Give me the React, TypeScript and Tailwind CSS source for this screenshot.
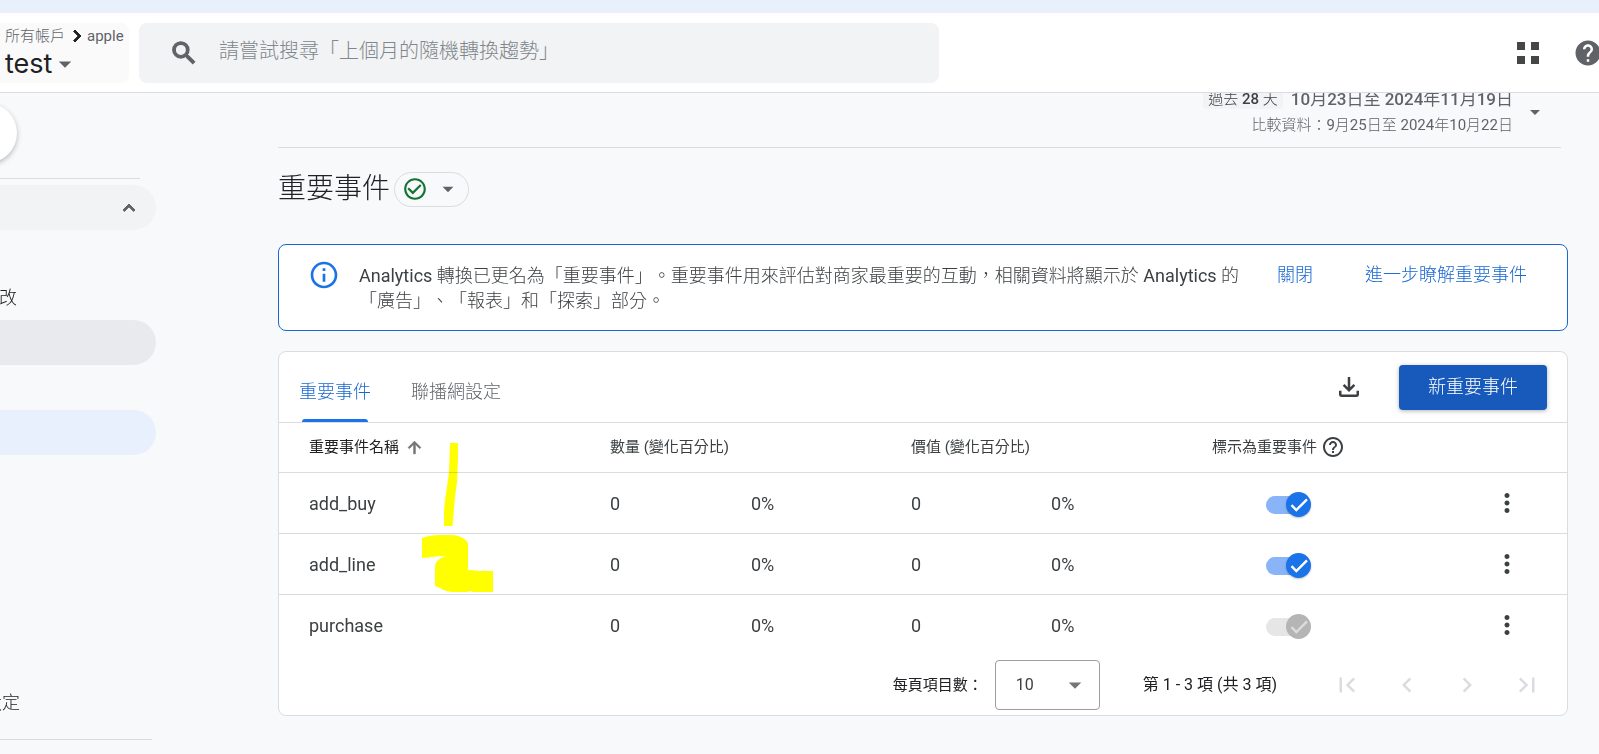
import React from "react";

type EventRow = { name: string; count: string; countChange: string; value: string; valueChange: string; locked?: boolean };

const rows: EventRow[] = [
  { name: "add_buy", count: "0", countChange: "0%", value: "0", valueChange: "0%" },
  { name: "add_line", count: "0", countChange: "0%", value: "0", valueChange: "0%" },
  { name: "purchase", count: "0", countChange: "0%", value: "0", valueChange: "0%", locked: true },
];

function Icon({ d, className }: { d: string; className: string }) {
  return (
    <svg viewBox="0 0 24 24" fill="currentColor" aria-hidden="true" className={className}>
      <path d={d} />
    </svg>
  );
}

const paths = {
  search:
    "M15.5 14h-.79l-.28-.27A6.471 6.471 0 0 0 16 9.5 6.5 6.5 0 1 0 9.5 16c1.61 0 3.09-.59 4.23-1.57l.27.28v.79l5 4.99L20.49 19l-4.99-5zm-6 0C7.01 14 5 11.99 5 9.5S7.01 5 9.5 5 14 7.01 14 9.5 11.99 14 9.5 14z",
  help: "M12 2C6.48 2 2 6.48 2 12s4.48 10 10 10 10-4.48 10-10S17.52 2 12 2zm1 17h-2v-2h2v2zm2.07-7.75-.9.92C13.45 12.9 13 13.5 13 15h-2v-.5c0-1.1.45-2.1 1.17-2.83l1.24-1.26c.37-.36.59-.86.59-1.41 0-1.1-.9-2-2-2s-2 .9-2 2H8c0-2.21 1.79-4 4-4s4 1.79 4 4c0 .88-.36 1.68-.93 2.25z",
  helpOutline:
    "M11 18h2v-2h-2v2zm1-16C6.48 2 2 6.48 2 12s4.48 10 10 10 10-4.48 10-10S17.52 2 12 2zm0 18c-4.41 0-8-3.59-8-8s3.59-8 8-8 8 3.59 8 8-3.59 8-8 8zm0-14c-2.21 0-4 1.79-4 4h2c0-1.1.9-2 2-2s2 .9 2 2c0 2-3 1.75-3 5h2c0-2.25 3-2.5 3-5 0-2.21-1.79-4-4-4z",
  info: "M11 7h2v2h-2zm0 4h2v6h-2zm1-9C6.48 2 2 6.48 2 12s4.48 10 10 10 10-4.48 10-10S17.52 2 12 2zm0 18c-4.41 0-8-3.59-8-8s3.59-8 8-8 8 3.59 8 8-3.59 8-8 8z",
  check:
    "M16.59 7.58 10 14.17l-3.59-3.58L5 12l5 5 8-8zM12 2C6.48 2 2 6.48 2 12s4.48 10 10 10 10-4.48 10-10S17.52 2 12 2zm0 18c-4.42 0-8-3.58-8-8s3.58-8 8-8 8 3.58 8 8-3.58 8-8 8z",
  drop: "M7 10l5 5 5-5z",
  expandLess: "M12 8l-6 6 1.41 1.41L12 10.83l4.59 4.58L18 14z",
  chevronRight: "M10 6 8.59 7.41 13.17 12l-4.58 4.59L10 18l6-6z",
  chevronLeft: "M15.41 7.41 14 6l-6 6 6 6 1.41-1.41L10.83 12z",
  first: "M18.41 16.59 13.82 12l4.59-4.59L17 6l-6 6 6 6zM6 6h2v12H6z",
  last: "M5.59 7.41 10.18 12l-4.59 4.59L7 18l6-6-6-6zM16 6h2v12h-2z",
  arrowUp: "M4 12l1.41 1.41L11 7.83V20h2V7.83l5.58 5.59L20 12l-8-8-8 8z",
  more: "M12 8c1.1 0 2-.9 2-2s-.9-2-2-2-2 .9-2 2 .9 2 2 2zm0 2c-1.1 0-2 .9-2 2s.9 2 2 2 2-.9 2-2-.9-2-2-2zm0 6c-1.1 0-2 .9-2 2s.9 2 2 2 2-.9 2-2-.9-2-2-2z",
  download: "M11 4h2v8.2l2.6-2.6L17 11l-5 5-5-5 1.4-1.4 2.6 2.6zM4 15h2v3h12v-3h2v3c0 1.1-.9 2-2 2H6c-1.1 0-2-.9-2-2z",
  apps: "M1 1h8v8H1zM15 1h8v8h-8zM1 15h8v8H1zM15 15h8v8h-8z",
};

function Header() {
  return (
    <header className="relative z-10 flex h-20 shrink-0 items-center border-b border-[#dadce0] bg-white">
      <button className="flex h-15 w-[129px] shrink-0 flex-col justify-center rounded-r-lg bg-[#fafafa] pb-[2px] pl-[5px] text-left">
        <span className="flex items-center text-[15px] leading-5 text-[#5f6368]">
          <span className="font-light">所有帳戶</span>
          <Icon d={paths.chevronRight} className="-mr-[2px] size-6 stroke-[#202124] text-[#202124]" />
          <span>apple</span>
        </span>
        <span className="flex items-center text-[27px] leading-8 text-[#202124]">
          <span className="font-['Inter',sans-serif]">test</span>
          <Icon d={paths.drop} className="-ml-[2px] size-[30px] text-[#5f6368]" />
        </span>
      </button>
      <label className="ml-[10px] flex h-15 w-1/2 items-center rounded-lg bg-[#f1f3f4] pl-[30px]">
        <Icon d={paths.search} className="size-[30px] shrink-0 stroke-[#5f6368] text-[#5f6368]" />
        <input
          type="search"
          aria-label="搜尋"
          placeholder="請嘗試搜尋「上個月的隨機轉換趨勢」"
          className="ml-5 min-w-0 flex-1 bg-transparent pb-1 text-xl font-light outline-none placeholder:text-[#80868b]"
        />
      </label>
      <div className="-mr-1 ml-auto flex shrink-0 items-center gap-[33px]">
        <button aria-label="應用程式">
          <Icon d={paths.apps} className="size-6 text-[#444746]" />
        </button>
        <button aria-label="說明">
          <Icon d={paths.help} className="size-[30px] text-[#5f6368]" />
        </button>
      </div>
    </header>
  );
}

function Sidebar() {
  return (
    <nav aria-label="報表" className="flex w-39 shrink-0 flex-col overflow-hidden text-lg font-light text-[#202124]">
      <button
        aria-label="首頁"
        className="mt-[10px] -ml-[43px] size-15 rounded-full bg-white shadow-[0_2px_5px_rgba(60,64,67,0.35)]"
      />
      <div className="mt-[15px] mr-4 border-t border-[#dadce0]" />
      <button aria-label="收合" className="mt-[6px] flex h-[45px] items-center justify-end rounded-r-full bg-[#f1f3f4] pr-[15px]">
        <Icon d={paths.expandLess} className="size-6 stroke-[#5f6368] text-[#5f6368]" />
      </button>
      <a href="#changes" className="mt-[45px] flex h-[45px] w-[17px] items-center justify-end whitespace-nowrap">
        改
      </a>
      <a href="#events" aria-label="事件" className="h-[45px] rounded-r-full bg-[#e8eaed]" />
      <a href="#key-events" aria-label="重要事件" className="mt-[45px] h-[45px] rounded-r-full bg-[#e8f0fe]" />
      <a href="#settings" className="mt-[225px] flex h-[45px] w-5 items-center justify-end whitespace-nowrap">
        設定
      </a>
      <div className="mt-[14px] mr-1 border-t border-[#dadce0]" />
    </nav>
  );
}

function DateRange() {
  return (
    <button className="flex w-full items-center justify-end gap-[10px] border-b border-[#dadce0] pr-[14px] pb-[10px] text-[#5f6368]">
      <span className="flex flex-col items-end gap-[2px]">
        <span className="flex items-center gap-2 text-[17px] leading-6 font-medium">
          <span className="rounded bg-[#f1f3f4] px-[5px] text-[15px] leading-5 text-[#3c4043]">
            <span className="font-light">過去</span> 28 <span className="font-light">天</span>
          </span>
          <span>
            10<span className="font-normal">月</span>23<span className="font-normal">日至</span> 2024
            <span className="font-normal">年</span>11<span className="font-normal">月</span>19
            <span className="font-normal">日</span>
          </span>
        </span>
        <span className="text-[15px] leading-6">
          <span className="font-light">比較資料：</span>9<span className="font-light">月</span>25
          <span className="font-light">日至</span> 2024<span className="font-light">年</span>10
          <span className="font-light">月</span>22<span className="font-light">日</span>
        </span>
      </span>
      <Icon d={paths.drop} className="size-6" />
    </button>
  );
}

function Banner() {
  return (
    <section className="mt-[37px] flex min-h-[87px] items-start rounded-lg border border-[#1967d2] bg-white pt-[14px] pr-10 pl-[29px]">
      <Icon d={paths.info} className="size-8 shrink-0 text-[#1a73e8]" />
      <p className="ml-[19px] flex-1 pt-1 text-lg leading-[25px] text-[#3c4043]">
        Analytics <span className="font-light">轉換已更名為「重要事件」。重要事件用來評估對商家最重要的互動，相關資料將顯示於</span>{" "}
        Analytics <span className="font-light">的</span>
        <br />
        <span className="font-light">「廣告」、「報表」和「探索」部分。</span>
      </p>
      <div className="flex shrink-0 gap-[52px] pt-[3px] text-lg leading-[25px] font-light text-[#1967d2]">
        <button>關閉</button>
        <a href="#learn">進一步瞭解重要事件</a>
      </div>
    </section>
  );
}

function Toggle({ row }: { row: EventRow }) {
  return (
    <label className="relative flex h-[27px] w-[45px] items-center">
      <input
        type="checkbox"
        role="switch"
        aria-label={row.name}
        defaultChecked
        disabled={row.locked}
        className="peer h-[18px] w-10 appearance-none rounded-full bg-[#8ab4f8] disabled:bg-[#e6e6e6]"
      />
      <span className="absolute right-0 flex size-[25px] items-center justify-center rounded-full bg-[#1a73e8] text-white shadow-[0_1px_2px_rgba(0,0,0,0.25)] peer-disabled:bg-[#b5b5b5] peer-disabled:text-[#dcdcdc] peer-disabled:shadow-none">
        <svg viewBox="0 0 25 25" fill="none" stroke="currentColor" strokeWidth="2.4" className="size-[25px]" aria-hidden="true">
          <path d="M5.5 13.2 10.3 18 21 7.3" />
        </svg>
      </span>
    </label>
  );
}

function EventsTable() {
  return (
    <table className="w-full table-fixed border-collapse text-left text-[#3c4043]">
      <colgroup>
        <col className="w-[301px]" />
        <col className="w-[141px]" />
        <col className="w-[160px]" />
        <col className="w-[140px]" />
        <col className="w-[161px]" />
        <col className="w-[265px]" />
        <col className="w-[120px]" />
      </colgroup>
      <thead>
        <tr className="h-[49px] border-b border-[#dadce0] text-[15px] leading-5">
          <th className="pl-[30px] font-normal text-[#202124]">
            <button className="flex items-center gap-[6px]">
              重要事件名稱
              <Icon d={paths.arrowUp} className="size-[19px] stroke-[#757575] text-[#757575]" />
            </button>
          </th>
          <th colSpan={2} className="pl-[30px] font-normal">
            數量 (變化百分比)
          </th>
          <th colSpan={2} className="pl-[30px] font-normal">
            價值 (變化百分比)
          </th>
          <th className="pl-[30px] font-normal">
            <span className="flex items-center gap-1">
              <span>標示為重要事件</span>
              <Icon d={paths.helpOutline} className="size-6" />
            </span>
          </th>
          <th aria-label="動作" />
        </tr>
      </thead>
      <tbody>
        {rows.map((row) => (
          <tr key={row.name} className="h-[61px] border-b border-[#dadce0] text-lg last:border-b-0">
            <td className="pt-[2px] pl-[30px]">{row.name}</td>
            <td className="pt-[2px] pl-[30px]">{row.count}</td>
            <td className="pt-[2px] pl-[30px]">{row.countChange}</td>
            <td className="pt-[2px] pl-[30px]">{row.value}</td>
            <td className="pt-[2px] pl-[30px]">{row.valueChange}</td>
            <td className="pt-1 pl-[84px]">
              <Toggle row={row} />
            </td>
            <td>
              <button aria-label={"更多：" + row.name} className="mr-[45px] ml-auto block">
                <Icon d={paths.more} className="size-[30px]" />
              </button>
            </td>
          </tr>
        ))}
      </tbody>
    </table>
  );
}

function Pagination() {
  const buttons = [
    { label: "第一頁", d: paths.first },
    { label: "上一頁", d: paths.chevronLeft },
    { label: "下一頁", d: paths.chevronRight },
    { label: "最後一頁", d: paths.last },
  ];
  return (
    <div className="flex h-15 items-center justify-end pr-[10px] text-[15px] text-[#202124]">
      <label htmlFor="page-size">每頁項目數：</label>
      <div className="relative ml-3">
        <select
          id="page-size"
          className="h-[50px] w-[105px] appearance-none rounded border border-[#9e9e9e] bg-white pl-5 text-base text-[#3c4043]"
          defaultValue="10"
        >
          <option>10</option>
          <option>25</option>
        </select>
        <Icon d={paths.drop} className="pointer-events-none absolute top-[10px] right-[10px] size-[30px] text-[#757575]" />
      </div>
      <span className="ml-[43px] text-base">第 1 - 3 項 (共 3 項)</span>
      <div className="ml-10 flex">
        {buttons.map((b) => (
          <button key={b.label} disabled aria-label={b.label} className="flex size-15 items-center justify-center text-[#dadce0]">
            <Icon d={b.d} className="size-[30px]" />
          </button>
        ))}
      </div>
    </div>
  );
}

function Annotations() {
  return (
    <svg
      viewBox="0 0 72 150"
      fill="#ffff00"
      aria-hidden="true"
      className="pointer-events-none absolute top-[91px] left-[143px] h-[150px] w-[72px] mix-blend-multiply"
    >
      <path d="M28 0h8v14l-1 26-2 14-2.500 29H22V68l1-11 4-27z" />
      <path d="M0 95c5-2 11-3 17-3h12c8 0 14 3 17 8v27l12 1h13v21H51l-2-1-4 1H33c-7 0-12-2-15-4l-5-2v-19c0-6 5-9 11-11-7 0-14 1-24 2z" />
    </svg>
  );
}

export default function App() {
  return (
    <div className="flex min-h-screen flex-col overflow-hidden bg-[#f8f9fb] font-['Roboto','Noto_Sans_CJK_TC',sans-serif] [text-spacing-trim:space-all]">
      <div className="h-[13px] shrink-0 bg-[#e8f0fc]" />
      <Header />
      <div className="flex flex-1">
        <Sidebar />
        <main className="min-w-0 flex-1 pr-[31px] pb-[38px] pl-[122px]">
          <div className="-mt-[6px] mr-[7px]">
            <DateRange />
          </div>
          <div className="mt-[23px] flex items-center gap-1">
            <h1 className="text-[28px] leading-9 font-light text-[#202124]">重要事件</h1>
            <button
              aria-label="狀態"
              className="flex h-[35px] w-[75px] items-center justify-between rounded-full border border-[#dadce0] px-[7px]"
            >
              <Icon d={paths.check} className="size-[26px] text-[#137333]" />
              <Icon d={paths.drop} className="size-[26px] text-[#5f6368]" />
            </button>
          </div>
          <Banner />
          <section className="relative mt-5 rounded-lg border border-[#dadce0] bg-white">
            <div className="flex h-[71px] items-center border-b border-[#dadce0] px-5">
              <div role="tablist" className="flex h-full gap-10 text-lg font-light">
                <button role="tab" aria-selected="true" className="relative pt-[10px] text-[#1967d2]">
                  重要事件
                  <span className="absolute inset-x-[3px] bottom-0 h-[3px] rounded-t bg-[#1a73e8]" />
                </button>
                <button role="tab" aria-selected="false" className="pt-[10px] text-[#5f6368]">
                  聯播網設定
                </button>
              </div>
              <button aria-label="下載" className="ml-auto">
                <Icon d={paths.download} className="size-[30px] text-[#3c4043]" />
              </button>
              <button className="ml-[35px] h-[45px] rounded bg-[#185abc] px-[29px] text-lg font-light text-white shadow-[0_1px_4px_rgba(60,64,67,0.4)]">
                新重要事件
              </button>
            </div>
            <EventsTable />
            <Pagination />
            <Annotations />
          </section>
        </main>
      </div>
    </div>
  );
}
